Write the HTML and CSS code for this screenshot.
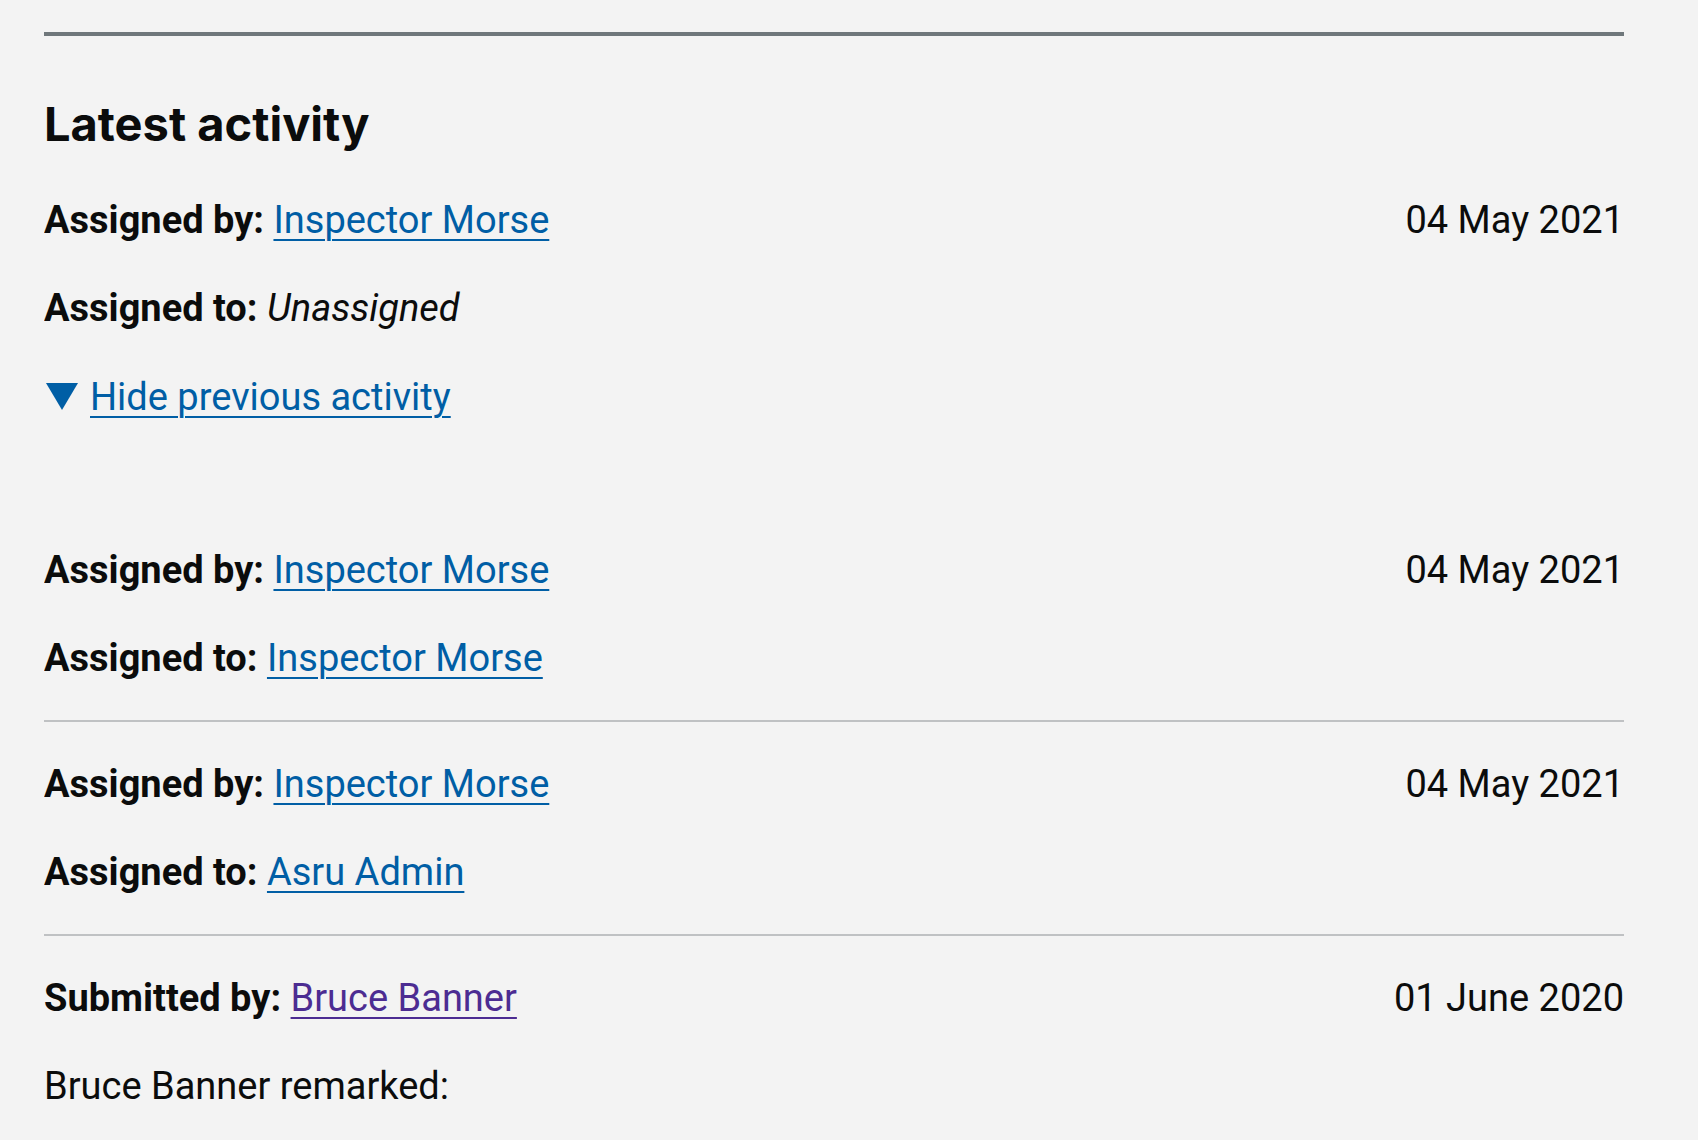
FILE: index.html
```html
<!DOCTYPE html>
<html lang="en">
<head>
<meta charset="utf-8">
<title>Latest activity</title>
<link rel="stylesheet" href="styles.css">
</head>
<body>
<main class="page">
  <hr class="section-break">
  <h2 class="heading">Latest activity</h2>

  <div class="entry entry-latest">
    <div class="row">
      <p class="line"><strong>Assigned by:</strong> <a class="link" href="#">Inspector Morse</a></p>
      <span class="date">04 May 2021</span>
    </div>
    <p class="line"><strong>Assigned to:</strong> <em>Unassigned</em></p>
  </div>

  <div class="toggle">
    <span class="triangle" aria-hidden="true"></span>
    <a class="link" href="#">Hide previous activity</a>
  </div>

  <div class="previous">
    <div class="entry entry-first">
      <div class="row">
        <p class="line"><strong>Assigned by:</strong> <a class="link" href="#">Inspector Morse</a></p>
        <span class="date">04 May 2021</span>
      </div>
      <p class="line"><strong>Assigned to:</strong> <a class="link" href="#">Inspector Morse</a></p>
    </div>

    <div class="entry">
      <div class="row">
        <p class="line"><strong>Assigned by:</strong> <a class="link" href="#">Inspector Morse</a></p>
        <span class="date">04 May 2021</span>
      </div>
      <p class="line"><strong>Assigned to:</strong> <a class="link" href="#">Asru Admin</a></p>
    </div>

    <div class="entry entry-last">
      <div class="row">
        <p class="line"><strong>Submitted by:</strong> <a class="link link-visited" href="#">Bruce Banner</a></p>
        <span class="date">01 June 2020</span>
      </div>
      <p class="line">Bruce Banner remarked:</p>
    </div>
  </div>
</main>
</body>
</html>
```

FILE: styles.css
```css
html, body {
  margin: 0;
  padding: 0;
  background: #f3f3f3;
}

body {
  font-family: Roboto, "Noto Sans", "Liberation Sans", sans-serif;
  color: #0b0c0c;
  font-size: 38px;
  line-height: 48px;
}

.page {
  margin: 0 74px 0 44px;
  padding-top: 32px;
  height: 1108px;
  overflow: hidden;
}

.section-break {
  margin: 0 0 58px 0;
  border: 0;
  height: 4px;
  background: #6f777b;
}

.heading {
  margin: 0 0 42px 0;
  font-family: Inter, Roboto, "Liberation Sans", sans-serif;
  font-size: 47px;
  line-height: 60px;
  font-weight: 700;
}

.line {
  margin: 0;
}

.entry {
  display: flex;
  flex-direction: column;
  gap: 40px;
}

.row {
  display: flex;
  justify-content: space-between;
  align-items: baseline;
}

.date {
  font-weight: 400;
}

strong {
  font-weight: 700;
}

em {
  font-style: italic;
}

.link {
  color: #005ea5;
  text-decoration: underline;
  text-decoration-thickness: 2px;
  text-underline-offset: 6px;
}

.link-visited {
  color: #4c2c92;
}

.toggle {
  margin-top: 41px;
  display: flex;
  align-items: flex-start;
  gap: 12px;
}

.triangle {
  flex: none;
  width: 32px;
  height: 27px;
  margin-top: 10px;
  margin-left: 2px;
  background: #005ea5;
  clip-path: polygon(0 0, 100% 0, 50% 100%);
}

.previous {
  margin-top: 125px;
}

.entry-first {
  padding-bottom: 38px;
  border-bottom: 2px solid #bfc1c3;
}

.previous .entry + .entry {
  padding-top: 38px;
}

.previous .entry:not(.entry-last):not(.entry-first) {
  padding-bottom: 38px;
  border-bottom: 2px solid #bfc1c3;
}
```
